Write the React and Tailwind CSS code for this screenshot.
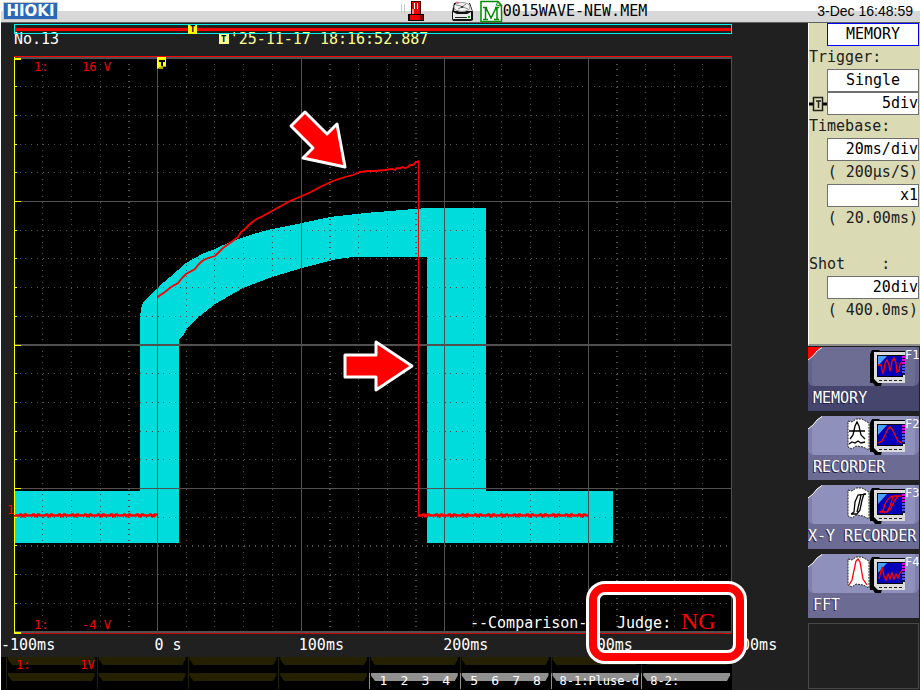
import React from "react";

// Plot area, in screen units
const LEFT = 14;
const TOP = 58;
const DIV = 28.7;

const timeLabels = ["0 s", "100ms", "200ms", "300ms"];

const settings = [
  { type: "box", text: "MEMORY", name: "Mode", active: true, center: true },
  { type: "label", text: "Trigger:" },
  { type: "box", text: "Single", name: "Trigger mode", center: true },
  { type: "box", text: "5div", name: "Pre-trigger", icon: true },
  { type: "label", text: "Timebase:" },
  { type: "box", text: "20ms/div", name: "Timebase" },
  { type: "note", text: "( 200μs/S)" },
  { type: "box", text: "x1", name: "Magnification" },
  { type: "note", text: "( 20.00ms)" },
  { type: "label", text: "" },
  { type: "label", text: "Shot    :" },
  { type: "box", text: "20div", name: "Shot length" },
  { type: "note", text: "( 400.0ms)" },
];

const functions = [
  {
    id: "F1",
    name: "MEMORY",
    selected: true,
    pad: "pl-[5px]",
    wave: "M31 18h3l1 5 1 3 1 -3 1 -7 2 -3 2 5 1 6 1 -3 1 -7 2 -3 2 5 1 9 2 -1 1 -7 2 -2",
  },
  {
    id: "F2",
    name: "RECORDER",
    pad: "pl-[5px]",
    wave: "M31 27l4 -2 3 -6 3 -6 2 -2 2 2 3 6 3 6 4 2",
    paper: "M3 23l3 -4 2 -9 2 -4 2 4 2 9 4 4 M2 15h16 M2 28l3 -2 3 1 3 -2 3 2 4 -1",
    paperColor: "#000",
  },
  {
    id: "F3",
    name: "X-Y RECORDER",
    pad: "pl-0",
    wave: "M32 27h8l4 -4 4 -8 3 -4h3 M33 27l3 -2 3 -8 4 -5 4 -1h5 M40 27l3 -6 3 -9",
    paper: "M4 29h6l3 -4 2 -10 2 -6h2 M4 29l3 -2 1 -10 3 -7 8 -1 M10 27l2 -8 2 -9",
    paperColor: "#000",
  },
  {
    id: "F4",
    name: "FFT",
    pad: "pl-[5px]",
    wave: "M32 25l3 -12 2 9 2 4 2 -6 2 5 2 -6 2 6 2 -5 2 4 2 -5 2 -3",
    paper: "M2 31l3 -5 4 -19 2 -2 2 3 3 17 4 6",
    paperColor: "#f00",
  },
];

// dotted grid, one dot every fifth of a division
const makeDots = () => {
  let d = "";
  for (let r = 1; r < 20; r++) {
    if (r % 5 === 0) continue;
    const y = Math.round(TOP - 0.5 + r * DIV);
    const h = r === 17 ? 2 : 1;
    for (let i = 1; i < 125; i++) {
      d += `M${Math.round(LEFT + (i * DIV) / 5)} ${y}h1v${h}h-1z`;
    }
  }
  for (let c = 1; c < 25; c++) {
    if (c % 5 === 0) continue;
    const x = Math.floor(LEFT + c * DIV);
    const w = [4, 11, 14, 21].includes(c) ? 2 : 1;
    for (let i = 1; i < 100; i++) {
      d += `M${x} ${Math.round(TOP + (i * DIV) / 5)}h${w}v1h${-w}z`;
    }
  }
  return d;
};

// small ripple for the flat parts of the trace
const makeNoise = (from, to) => {
  let d = `M${from} 515`;
  for (let x = from; x < to; x++) {
    const n = (x * x * 31 + x * 17) % 13;
    d += `L${x} ${n > 10 ? 516 : n < 2 ? 514.5 : 515.5}`;
  }
  return d;
};

const dots = makeDots();

const Plot = () => (
  <svg
    viewBox="14 56 718 578"
    className="relative z-10 block h-auto w-full overflow-visible font-['DejaVu_Sans_Mono',monospace]"
    role="img"
    aria-label="Recorded waveform with comparison area"
  >
    <g shapeRendering="crispEdges">
      <rect x="14" y="56" width="718" height="578" fill="#000" />
      {/* comparison area */}
      <path
        fill="#00dcdc"
        d="M14 491H140V317L141 309L143 303L148 297L157 288L170 277L186 263L202 254L215 249L230 242L253 234L272 229L302 223L330 217L365 213L390 211L427 208H486V491H613V543H427V257H353L337 259L302 268L272 277L243 288L215 304L200 316L188 327L184 334L179 340V543H14Z"
      />
      <path d={dots} fill="#505050" />
      <g fill="#505050">
        <rect x="14" y="57" width="718" height="2" />
        <rect x="14" y="201" width="718" height="1" />
        <rect x="14" y="344" width="718" height="2" />
        <rect x="14" y="488" width="718" height="1" />
        <rect x="14" y="631" width="718" height="2" />
        {[157, 301, 444, 588, 731].map((x) => (
          <rect key={x} x={x} y="58" width="1" height="574" />
        ))}
      </g>
      <rect x="14" y="56" width="718" height="1" fill="#f00" />
      <rect x="14" y="633" width="718" height="1" fill="#d00000" />
      <g fill="#ff0">
        <rect x="14" y="57" width="1" height="576" />
        {Array.from({ length: 21 }, (_, i) => (
          <rect
            key={i}
            x="14"
            y={Math.round(TOP - 0.5 + i * DIV)}
            width={i % 5 === 0 ? 7 : 3}
            height={i % 20 === 0 ? 2 : 1}
          />
        ))}
      </g>
      {/* channel 1 */}
      <rect x="157" y="298" width="1" height="218" fill="#c01818" />
      <rect x="418" y="161" width="1" height="354" fill="#f00" />
    </g>
    <g fill="none" stroke="#f00">
      <path strokeWidth="2.6" d={makeNoise(15, 158)} />
      <path strokeWidth="2.6" d={makeNoise(419, 589)} />
      <path
        strokeWidth="1.8"
        d="M157.500 298L159 296L165 292L171 287L178 283L182 278L186 274L195 269L198 265L202 261L208 258L215 256L219 252L223 248L230 243L234 240L238 237L241 232L245 229L250 224L255 220L263 216L272 211L281 206L290 201L302 196L311 192L320 187L333 181L339 179L345 177L353 175L360 172L368 171L375 171L385 170L392 169L395 170L397 168L400 168.500L402 167L405 168L408 167L410 165L413 165L416 162L419 161"
      />
    </g>

    {/* trigger position */}
    <path d="M157 57h9v10h-3v2h-5l2 -2h-3z" fill="#a8a800" />
    <path d="M157 57h9v9h-4l-5 3z" fill="#ff0" />
    <path d="M159 60h6v2h-2v4h-2v-4h-2z" fill="#000" />

    <g fill="#f00" fontSize="12">
      <text x="34" y="71">1:</text>
      <text x="82" y="71">16 V</text>
      <text x="34" y="629">1:</text>
      <text x="82" y="629">-4 V</text>
      <text x="7" y="514">1</text>
    </g>
    <g fill="#fff" fontSize="15">
      <text x="470" y="628">--Comparison--</text>
      <text x="617" y="628">Judge:</text>
    </g>
    <text x="681" y="629" fontSize="24" fill="#f00" className="font-['Liberation_Serif',serif]">NG</text>

    {/* callouts */}
    <rect x="593" y="588" width="147" height="69" rx="12" fill="none" stroke="#fff" strokeWidth="14" />
    <rect x="593" y="588" width="147" height="69" rx="12" fill="none" stroke="#f00" strokeWidth="8" />
    <g fill="#f00" stroke="#fff" strokeWidth="3" strokeLinejoin="round">
      <path d="M305 112L327 134L337 124L345 167L303 158L313 148L291 126Z" />
      <path d="M345 355H376V342L412 366L376 390V377H345Z" />
    </g>
  </svg>
);

const StatusIcons = () => (
  <>
    <svg viewBox="0 0 26 23" className="h-[23px] w-[26px] shrink-0" shapeRendering="crispEdges" aria-hidden="true">
      <path d="M0 4h1v10h-1z M3 4h1v10h-1z" fill="#c8c8c8" />
      <path d="M10 1h10v13h-10z" fill="#300" />
      <path d="M11 2h8v12h-8z" fill="#e00" />
      <path d="M13 3h1v6h-1z M16 3h1v6h-1z" fill="#fff" />
      <path d="M11 9h2v5h-2z" fill="#f88" />
      <path d="M7 14h16v7h-16z" fill="#000" />
      <path d="M9 15h10v5h-10z" fill="#e00" />
      <path d="M19 15h3v5h-3z" fill="#800" />
    </svg>
    <svg viewBox="0 0 26 23" className="ml-[23px] h-[23px] w-[26px] shrink-0" aria-hidden="true">
      <path d="M4 3h16l3 9v8l-2 1h-18l-1 -2v-7z" fill="#111" />
      <path d="M4 11l2 -8h13l3 8z" fill="#e4e4e4" />
      <ellipse cx="12" cy="7" rx="8" ry="4.500" fill="#f4f4f4" stroke="#999" />
      <path d="M6 5l5 1 M13 7l5 2 M8 9l4 -2 4 -3" stroke="#888" fill="none" />
      <ellipse cx="12" cy="7" rx="1.500" ry="1" fill="#333" />
      <path d="M5 3l2 -1 2 1" stroke="#e0408c" fill="none" />
      <path d="M3 12l4 2h10l4 -2v7h-18z" fill="#e8e8e8" />
      <path d="M5 17h12v1h-12z" fill="#222" />
      <path d="M18 16h2v2h-2z" fill="#0a0" />
    </svg>
    <svg viewBox="0 0 23 23" className="ml-[4px] h-[23px] w-[23px] shrink-0" aria-hidden="true">
      <path d="M1 1.500h17l3.500 4v16h-20.500z" fill="#fff" stroke="#008c00" strokeWidth="1.500" />
      <path d="M16 5l2 -3 3 4z" fill="#fff" stroke="#008c00" />
      <path d="M3 7.500h4 M15 7.500h4 M5.500 7v12 M3 19.500h5 M17 7v12 M14 19.500h5 M6 8l5 10l5 -10" fill="none" stroke="#008c00" strokeWidth="1.500" />
    </svg>
  </>
);

const ModeIcon = ({ wave, paper, paperColor }) => (
  <svg viewBox="0 0 58 40" className="h-[40px] w-[58px] shrink-0" aria-hidden="true">
    {paper && (
      <>
        <path d="M1 5l4 1 4 -3 6 0 7 4v27l-6 -3 -7 -1 -4 3 -4 -2z" fill="#fff" stroke="#222" strokeDasharray="2 1" />
        <path d={paper} fill="none" stroke={paperColor} strokeWidth="1.300" />
      </>
    )}
    <path d="M25 3h7l3 3v29l-1 4h-6l-2 -3h-3v-29z" fill="#000" />
    <path d="M26 4h32v32h-26l-5 -4v-20z" fill="#000" />
    <path d="M27 5h31v31h-27l-4 -4z" fill="#dcdcdc" />
    <path d="M30 8h26v22h-26z" fill="#000" />
    <path d="M31 9h24v20h-24z" fill="#0000b8" />
    <path d="M31 9h9l-9 10z" fill="#48a0ff" />
    <path d="M32 33.500h23" stroke="#222" strokeDasharray="3 2" />
    <path d={wave} fill="none" stroke="#f00" strokeWidth="1.300" />
    <path d="M55 8h3v20h-3z" fill="#101040" />
    <path d="M55 9h3v2h-3z M55 12h3v2h-3z M55 15h3v2h-3z" fill="#e000e0" />
    <path d="M55 18h3v2h-3z M55 21h3v2h-3z M55 24h3v2h-3z" fill="#5050f0" />
  </svg>
);

const FunctionKey = ({ item }) => (
  <button
    type="button"
    aria-pressed={!!item.selected}
    className={`flex h-[64px] w-full flex-col overflow-hidden text-left text-white ${
      item.selected ? "bg-[#45456e]" : "bg-[#6b6b94]"
    }`}
  >
    <span
      className={`flex h-[39px] w-full items-start rounded-b-md border-x-4 ${
        item.selected ? "border-[#62628a] bg-[#6d6d94]" : "border-[#8080ac] bg-[#9090bc]"
      }`}
    >
      <svg viewBox="0 0 14 14" className="-ml-[4px] h-[14px] w-[14px] shrink-0" aria-hidden="true">
        <path d="M0 0h14l-5 4-4 5-5 4z" fill={item.selected ? "#f00" : "#202020"} />
        <path d="M14 0.500l-5 3.500-4 5-5 4" fill="none" stroke="#fff" />
      </svg>
      <span className="ml-auto flex items-start">
        <ModeIcon wave={item.wave} paper={item.paper} paperColor={item.paperColor} />
        <span className="-mr-[4px] w-[14px] text-[12px] leading-[16px]">{item.id}</span>
      </span>
    </span>
    <span className={`whitespace-pre leading-[25px] [text-shadow:-1px_1px_#202050] ${item.pad}`}>{item.name}</span>
  </button>
);

const Tab = ({ light, children }) => (
  <div className={`relative h-[16px] min-w-0 border-l bg-black ${light ? "border-[#909090]" : "border-[#242000]"}`}>
    <div
      className={`h-[8px] [clip-path:polygon(1px_0,calc(100%-2px)_0,calc(100%-2px)_30%,calc(100%-5px)_100%,5px_100%,1px_30%)] ${
        light ? "bg-[#909090]" : "bg-[#242000]"
      }`}
    />
    <div className="absolute inset-x-0 top-0 flex h-[16px] items-center whitespace-pre">{children}</div>
  </div>
);

const App = () => {
  return (
    <div className="flex min-h-screen flex-col overflow-hidden border-l border-white bg-[#202020] font-['DejaVu_Sans_Mono',monospace] text-[15px]">
      <header className="flex h-[23px] items-center border-b border-[#606060] bg-[linear-gradient(#fff_50%,#d8d8d8_50%)] text-black">
        <div className="flex w-[43.5%] shrink-0">
          <h1 className="ml-[2px] flex h-[18px] w-[55px] items-center justify-center border border-[#c8c8c8] bg-[#2b68b8] font-['DejaVu_Sans',sans-serif] text-[15px] font-bold text-white">
            HIOKI
          </h1>
        </div>
        <StatusIcons />
        <span className="whitespace-nowrap">0015WAVE-NEW.MEM</span>
        <time className="ml-auto whitespace-nowrap pr-[7px] font-['Liberation_Sans',sans-serif] text-[14px]">3-Dec 16:48:59</time>
      </header>

      <div className="flex flex-1">
        <main className="flex min-w-0 flex-1 flex-col">
          <div className="pl-[13px] pr-[76px]">
            <div className="relative mt-[1px] flex h-[10px] items-center border border-[#00f0f0]">
              <div className="h-[3px] w-full bg-[#f00]" />
              <span className="absolute left-[24.2%] top-0 flex h-[9px] w-[9px] items-center justify-center bg-[#ff0] text-[9px] font-bold leading-[9px] text-black">
                T
              </span>
            </div>
            <div className="flex h-[22px] items-start whitespace-pre leading-[11px] text-white">
              <span className="w-[28.5%]">No.13</span>
              <span className="flex text-[#ffff8c]">
                <span className="mr-[1px] h-[10px] w-[10px] bg-[#ffff8c] text-center text-[9px] font-bold leading-[10px] text-black">T</span>
                '25-11-17 18:16:52.887
              </span>
            </div>
            <Plot />
          </div>

          <div className="flex h-[23px] whitespace-pre pl-[9px] pr-[76px] leading-[23px] text-white">
            <span className="w-0 flex-1">
              <span className="-ml-[9px]">-100ms</span>
            </span>
            {timeLabels.map((label) => (
              <span key={label} className="w-0 flex-1">{label}</span>
            ))}
            <span className="w-0">400ms</span>
          </div>

          <div className="mr-[76px] flex-1 bg-black pl-[5px]">
            <div className="grid grid-cols-8 text-[#f00]">
              <Tab>
                <span className="flex w-full justify-between pl-[9px] pr-[2px] text-[12px]">
                  <span>1:</span>
                  <span>1V</span>
                </span>
              </Tab>
              {[2, 3, 4, 5, 6, 7, 8].map((n) => (
                <Tab key={n} />
              ))}
            </div>
            <div className="grid grid-cols-8 text-[13px] text-white">
              {[1, 2, 3, 4].map((n) => (
                <Tab key={n} />
              ))}
              <Tab light>
                <span className="flex w-full justify-around px-[3px]">
                  <span>1</span>
                  <span>2</span>
                  <span>3</span>
                  <span>4</span>
                </span>
              </Tab>
              <Tab light>
                <span className="flex w-full justify-around px-[3px]">
                  <span>5</span>
                  <span>6</span>
                  <span>7</span>
                  <span>8</span>
                </span>
              </Tab>
              <Tab light>
                <span className="pl-[8px] text-[12px]">8-1:Pluse-d</span>
              </Tab>
              <Tab light>
                <span className="pl-[8px] text-[12px]">8-2:</span>
              </Tab>
            </div>
          </div>
        </main>

        <aside className="flex w-[112px] shrink-0 flex-col">
          <div className="h-[323px] border-b-2 border-l border-b-[#909090] border-l-white bg-[#dadab4] text-[#202020]">
            {settings.map((row, i) => {
              if (row.type === "box") {
                return (
                  <div key={i} className="flex h-[23px] items-center">
                    <span className="w-[18px] shrink-0">
                      {row.icon && (
                        <svg viewBox="0 0 18 23" className="h-[23px] w-[18px]" aria-hidden="true">
                          <path d="M0 12h4 M14 12h4" stroke="#000" strokeWidth="3" />
                          <path d="M4.500 5.500h9v13h-9z M7 9h5 M9.500 9v7" fill="none" stroke="#202020" strokeWidth="1.500" />
                        </svg>
                      )}
                    </span>
                    <button
                      type="button"
                      aria-label={`${row.name} ${row.text}`}
                      className={`mr-[1px] h-[23px] flex-1 border bg-white leading-[21px] text-black ${
                        row.active ? "border-[#00f]" : "border-[#707070]"
                      } ${row.center ? "text-center" : "text-right"}`}
                    >
                      {row.text}
                    </button>
                  </div>
                );
              }
              return (
                <p
                  key={i}
                  className={`h-[23px] whitespace-pre leading-[23px] ${row.type === "note" ? "pr-[2px] text-right" : ""}`}
                >
                  {row.text}
                </p>
              );
            })}
          </div>
          <nav className="mt-[1px] flex flex-1 flex-col gap-[5px] pr-[1px]" aria-label="Function keys">
            {functions.map((item) => (
              <FunctionKey key={item.id} item={item} />
            ))}
            <div className="mb-[1px] flex-1 border border-[#484848]" />
          </nav>
        </aside>
      </div>
    </div>
  );
};

export default App;
